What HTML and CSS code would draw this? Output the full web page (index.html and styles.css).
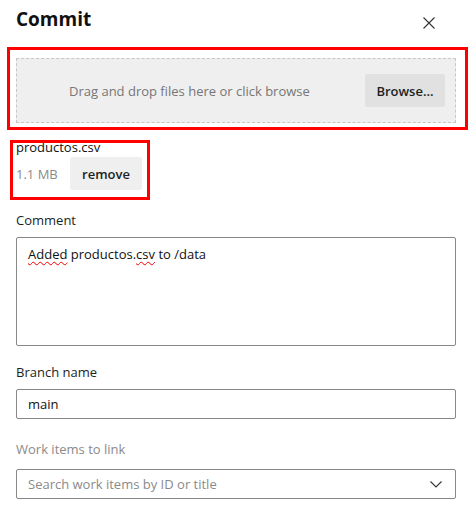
FILE: index.html
```html
<!DOCTYPE html>
<html lang="en">
<head>
<meta charset="utf-8">
<title>Commit</title>
<link rel="stylesheet" href="styles.css">
</head>
<body>
<div class="panel">
  <div class="header">
    <h1 class="title">Commit</h1>
    <button class="close" aria-label="Close">
      <svg width="12" height="12" viewBox="0 0 12 12"><path d="M0.5 0.5 L11.5 11.5 M11.5 0.5 L0.5 11.5" stroke="#333" stroke-width="1.1" fill="none"/></svg>
    </button>
  </div>

  <div class="dropzone">
    <span class="drop-text">Drag and drop files here or click browse</span>
    <button class="btn browse">Browse...</button>
  </div>

  <div class="file">
    <div class="file-name">productos.csv</div>
    <div class="file-row">
      <span class="file-size">1.1 MB</span>
      <button class="btn remove">remove</button>
    </div>
  </div>

  <label class="label label-comment">Comment</label>
  <div class="textarea"><span class="sp">Added</span> productos.<span class="sp">csv</span> to /data</div>

  <label class="label label-branch">Branch name</label>
  <div class="input">main</div>

  <label class="label label-muted">Work items to link</label>
  <div class="input select">
    <span class="placeholder">Search work items by ID or title</span>
    <svg class="chevron" width="12" height="7" viewBox="0 0 12 7"><path d="M0.5 0.5 L6 6 L11.5 0.5" stroke="#333" stroke-width="1.1" fill="none"/></svg>
  </div>

  <div class="mark mark-drop"></div>
  <div class="mark mark-file"></div>
</div>
</body>
</html>
```

FILE: styles.css
```css
* { box-sizing: border-box; }
html, body { margin: 0; padding: 0; background: #fff; }
body {
  font-family: "Open Sans", "Noto Sans", sans-serif;
  font-size: 13px;
  line-height: 20px;
  color: #201f1e;
}
.panel {
  position: relative;
  width: 468px;
  height: 513px;
  padding: 0 12px 0 16px;
}
.header {
  display: flex;
  justify-content: space-between;
  align-items: flex-start;
  height: 58px;
}
.title {
  margin: 0;
  padding-top: 5px;
  font-size: 19px;
  line-height: 28px;
  font-weight: 700;
  color: #111;
}
.close {
  margin: 17px 21px 0 0;
  padding: 0;
  border: 0;
  background: none;
  width: 12px;
  height: 12px;
  display: flex;
}
.dropzone {
  width: 440px;
  height: 65px;
  background: #efefef;
  border: 1px dashed #c6c6c6;
  display: flex;
  align-items: center;
  padding-left: 52px;
  padding-right: 10px;
  justify-content: space-between;
}
.drop-text { color: #767676; }
.btn {
  font-family: inherit;
  font-size: 13px;
  font-weight: 600;
  color: #201f1e;
  border: 0;
  border-radius: 2px;
  padding: 0;
  height: 33px;
}
.browse { width: 80px; background: #e1e1e1; }
.file { padding-top: 14px; }
.file-name { color: #111; }
.file-row {
  display: flex;
  align-items: center;
  gap: 10px;
}
.file-size { color: #8a8a8a; white-space: nowrap; flex: none; width: 44px; }
.remove { width: 72px; flex: none; background: #efefef; }
.label { display: block; color: #201f1e; }
.label-comment { margin-top: 20px; margin-bottom: 7px; }
.textarea {
  width: 440px;
  height: 109px;
  border: 1px solid #8a8886;
  border-radius: 2px;
  padding: 6px 11px;
  color: #111;
}
.sp {
  text-decoration: underline wavy #e00;
  text-decoration-thickness: 1px;
  text-underline-offset: 2px;
}
.label-branch { margin-top: 16px; margin-bottom: 7px; }
.input {
  width: 440px;
  height: 30px;
  border: 1px solid #8a8886;
  border-radius: 2px;
  padding: 4px 11px;
  color: #111;
}
.label-muted { margin-top: 20px; margin-bottom: 10px; color: #8a8a8a; }
.select {
  display: flex;
  align-items: center;
  justify-content: space-between;
  padding-right: 13px;
}
.placeholder { color: #8a8a8a; }
.mark {
  position: absolute;
  border: 3px solid #f00;
  pointer-events: none;
}
.mark-drop { left: 7px; top: 47px; width: 461px; height: 83px; }
.mark-file { left: 10px; top: 140px; width: 140px; height: 60px; }
```
